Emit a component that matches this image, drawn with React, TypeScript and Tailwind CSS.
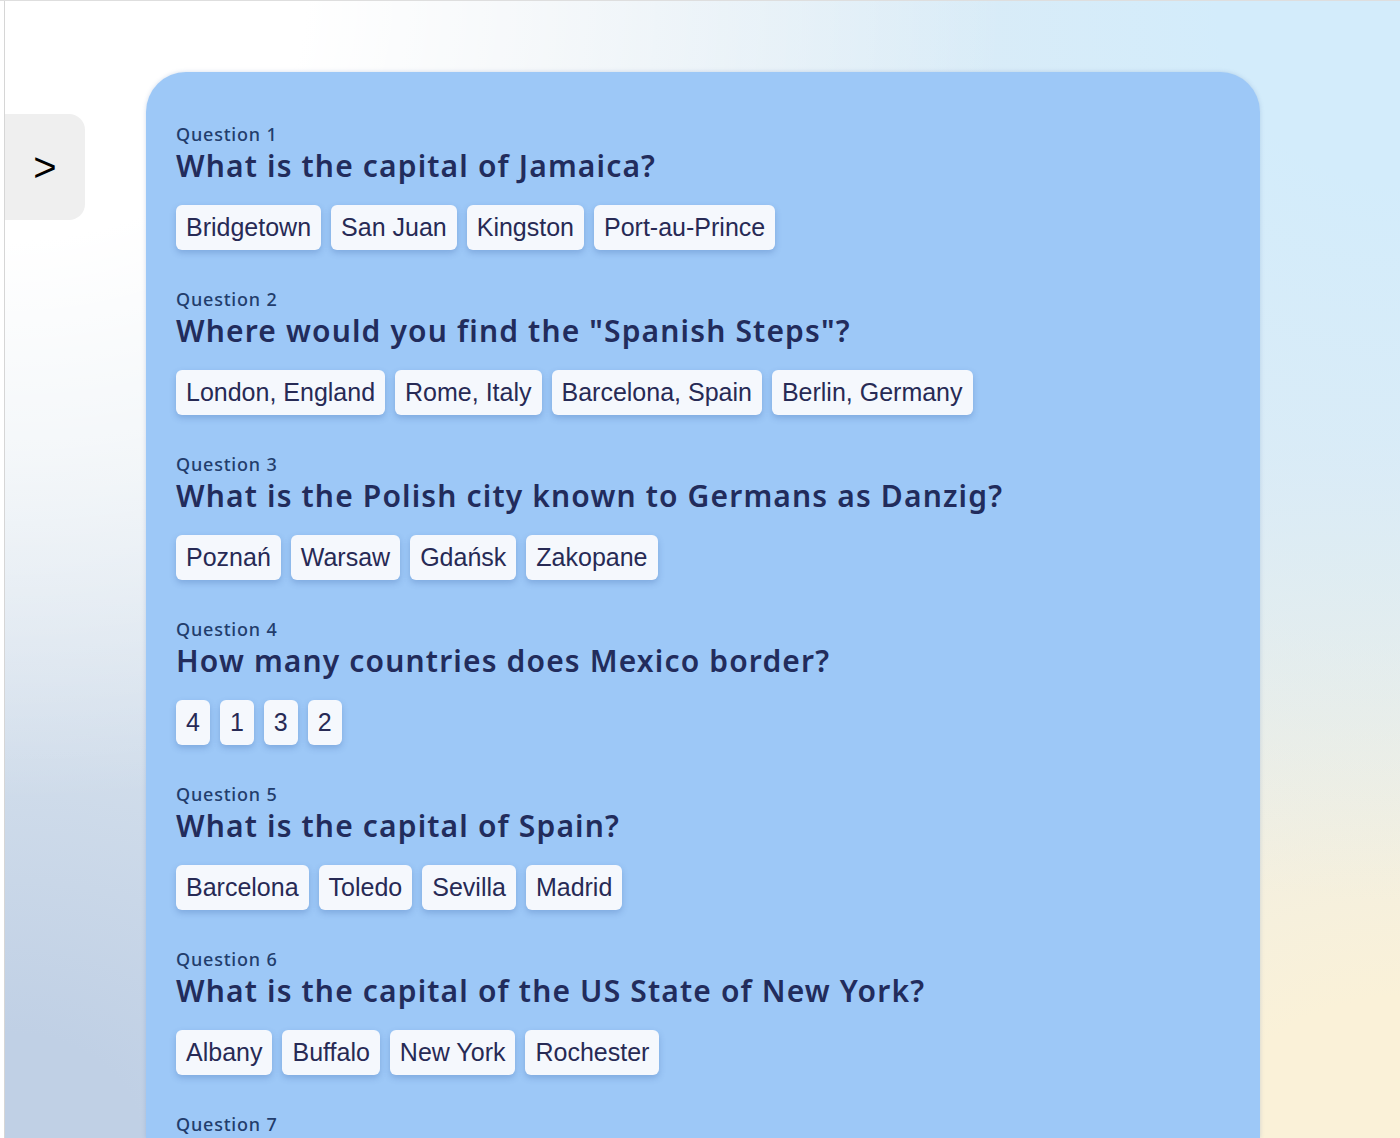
const questions = [
  { q: "What is the capital of Jamaica?", a: ["Bridgetown", "San Juan", "Kingston", "Port-au-Prince"] },
  { q: 'Where would you find the "Spanish Steps"?', a: ["London, England", "Rome, Italy", "Barcelona, Spain", "Berlin, Germany"] },
  { q: "What is the Polish city known to Germans as Danzig?", a: ["Poznań", "Warsaw", "Gdańsk", "Zakopane"] },
  { q: "How many countries does Mexico border?", a: ["4", "1", "3", "2"] },
  { q: "What is the capital of Spain?", a: ["Barcelona", "Toledo", "Sevilla", "Madrid"] },
  { q: "What is the capital of the US State of New York?", a: ["Albany", "Buffalo", "New York", "Rochester"] },
  { q: "Which river flows through Budapest?", a: ["Danube", "Rhine", "Vistula", "Elbe"] },
];

const QuestionBlock = ({ index, q, a }: { index: number; q: string; a: string[] }) => (
  <div className="mb-[37px]">
    <p className="text-[18px] leading-6 font-medium tracking-[0.8px] text-[#223d6c] font-['Noto_Sans',sans-serif]">Question {index}</p>
    <h2 className="text-[30px] leading-10 font-semibold tracking-[1.15px] text-[#222c5c] font-['Noto_Sans',sans-serif]">{q}</h2>
    <div className="flex gap-[10px] mt-[19px]">
      {a.map((opt) => (
        <button
          key={opt}
          className="h-[45px] px-[10px] rounded-md bg-[#f5f8fd] text-[25px] text-[#272a55] font-['Liberation_Sans',Arial,sans-serif] shadow-[0_3px_6px_rgba(40,80,150,0.25)]"
        >
          {opt}
        </button>
      ))}
    </div>
  </div>
);

export default function App() {
  return (
    <div className="w-[1400px] h-[1138px] overflow-hidden bg-white border-t border-[#dedede]">
      <div className="h-full ml-1 border-l border-[#d6d6d6] flex bg-[#e3ebf1] bg-[radial-gradient(ellipse_1000px_800px_at_0%_0%,#ffffff_30%,rgba(255,255,255,0)_100%),radial-gradient(ellipse_900px_900px_at_100%_0%,#d3ecfb_20%,rgba(211,236,251,0)_100%),radial-gradient(ellipse_900px_700px_at_0%_100%,#c0d0e5_15%,rgba(192,208,229,0)_100%),radial-gradient(ellipse_900px_700px_at_100%_100%,#faf1d8_20%,rgba(250,241,216,0)_100%)]">
        <button className="mt-[113px] w-[80px] h-[106px] rounded-r-2xl bg-[#efefef] flex items-center justify-center text-[40px] text-black font-['Liberation_Sans',Arial,sans-serif]">
          &gt;
        </button>
        <main className="mt-[71px] ml-[61px] w-[1114px] shrink-0 rounded-t-[40px] bg-[#9dc8f7] shadow-[0_0_4px_rgba(80,120,180,0.25)] pt-[50px] px-[30px]">
          {questions.map((item, i) => (
            <QuestionBlock key={i} index={i + 1} q={item.q} a={item.a} />
          ))}
        </main>
      </div>
    </div>
  );
}
